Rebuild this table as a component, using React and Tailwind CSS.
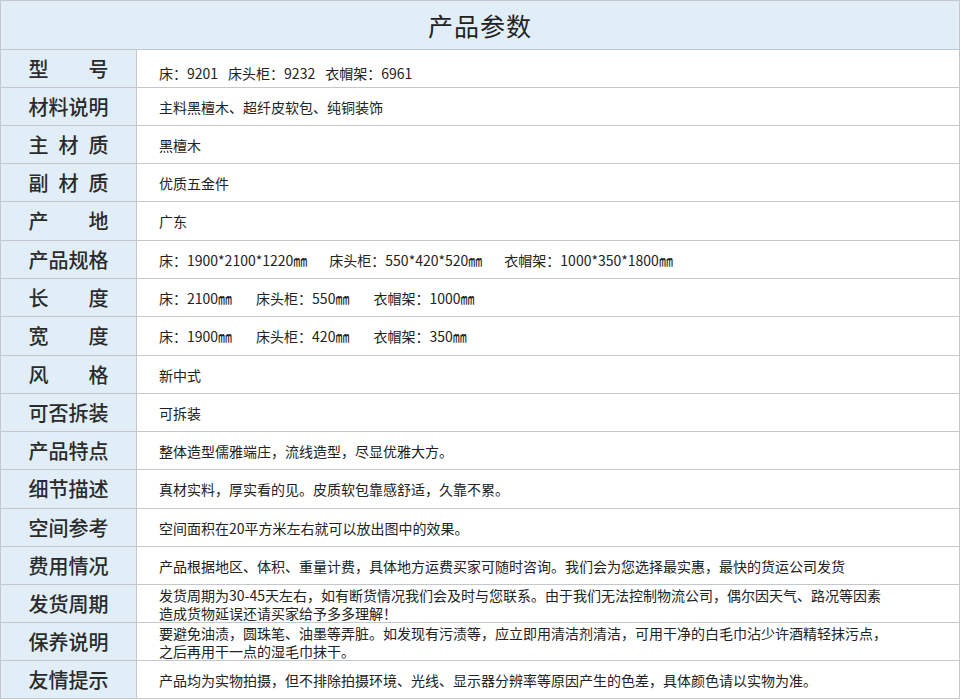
// Product parameter sheet: title bar + two-column label/value rows
const rows = [
  { label: ["型", "号"], h: "h-[38px]", pad: "pt-[8px]", gap: "gap-[10px]", segs: ["床：9201", "床头柜：9232", "衣帽架：6961"] },
  { label: ["材", "料", "说", "明"], h: "h-[38px]", lines: ["主料黑檀木、超纤皮软包、纯铜装饰"] },
  { label: ["主", "材", "质"], h: "h-[38px]", lines: ["黑檀木"] },
  { label: ["副", "材", "质"], h: "h-[38px]", lines: ["优质五金件"] },
  { label: ["产", "地"], h: "h-[39px]", lines: ["广东"] },
  { label: ["产", "品", "规", "格"], h: "h-[38px]", gap: "gap-[22px]", segs: ["床：1900*2100*1220㎜", "床头柜：550*420*520㎜", "衣帽架：1000*350*1800㎜"] },
  { label: ["长", "度"], h: "h-[38px]", gap: "gap-[24px]", segs: ["床：2100㎜", "床头柜：550㎜", "衣帽架：1000㎜"] },
  { label: ["宽", "度"], h: "h-[39px]", gap: "gap-[24px]", segs: ["床：1900㎜", "床头柜：420㎜", "衣帽架：350㎜"] },
  { label: ["风", "格"], h: "h-[38px]", lines: ["新中式"] },
  { label: ["可", "否", "拆", "装"], h: "h-[38px]", lines: ["可拆装"] },
  { label: ["产", "品", "特", "点"], h: "h-[38px]", lines: ["整体造型儒雅端庄，流线造型，尽显优雅大方。"] },
  { label: ["细", "节", "描", "述"], h: "h-[39px]", lines: ["真材实料，厚实看的见。皮质软包靠感舒适，久靠不累。"] },
  { label: ["空", "间", "参", "考"], h: "h-[38px]", lines: ["空间面积在20平方米左右就可以放出图中的效果。"] },
  { label: ["费", "用", "情", "况"], h: "h-[38px]", lines: ["产品根据地区、体积、重量计费，具体地方运费买家可随时咨询。我们会为您选择最实惠，最快的货运公司发货"] },
  {
    label: ["发", "货", "周", "期"],
    h: "h-[38px]",
    lines: [
      "发货周期为30-45天左右，如有断货情况我们会及时与您联系。由于我们无法控制物流公司，偶尔因天气、路况等因素",
      "造成货物延误还请买家给予多多理解！",
    ],
  },
  {
    label: ["保", "养", "说", "明"],
    h: "h-[38px]",
    lines: [
      "要避免油渍，圆珠笔、油墨等弄脏。如发现有污渍等，应立即用清洁剂清洁，可用干净的白毛巾沾少许酒精轻抹污点，",
      "之后再用干一点的湿毛巾抹干。",
    ],
  },
  { label: ["友", "情", "提", "示"], h: "h-[38px]", lines: ["产品均为实物拍摄，但不排除拍摄环境、光线、显示器分辨率等原因产生的色差，具体颜色请以实物为准。"] },
];

export default function App() {
  return (
    <div className="w-[960px] h-[700px] bg-white font-['Noto_Sans_CJK_SC',sans-serif]">
      <div className="w-[960px] border-t border-x border-[#c4c8cc]">
        <div className="h-[49px] border-b border-[#c4c8cc] bg-[#e1eef8] flex items-center justify-center">
          <h1 className="text-[25px] leading-none text-[#222] tracking-[1px]">产品参数</h1>
        </div>

        {rows.map((r, i) => (
          <div key={i} className={`${r.h} flex border-b border-[#c4c8cc]`}>
            <div className="w-[136px] shrink-0 border-r border-[#c4c8cc] bg-[#e1eef8] flex items-center justify-center">
              <div className="w-[80px] flex justify-between text-[20px] leading-none font-medium text-[#2b2b2b]">
                {r.label.map((c, j) => (
                  <span key={j}>{c}</span>
                ))}
              </div>
            </div>
            <div className={`flex-1 flex flex-col justify-center pl-[22px] text-[14px] leading-[18px] text-[#222] ${r.pad || ""}`}>
              {r.segs ? (
                <div className={`flex ${r.gap}`}>
                  {r.segs.map((s, j) => (
                    <span key={j} className="whitespace-nowrap">{s}</span>
                  ))}
                </div>
              ) : (
                r.lines.map((l, j) => (
                  <p key={j} className="whitespace-nowrap">{l}</p>
                ))
              )}
            </div>
          </div>
        ))}
      </div>
    </div>
  );
}
